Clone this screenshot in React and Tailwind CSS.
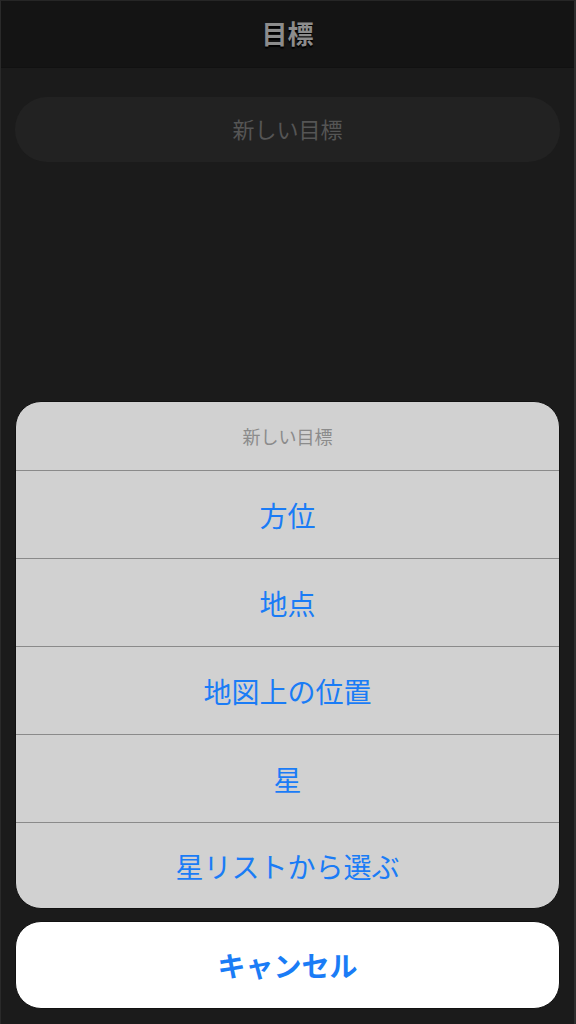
export default function App() {
  const font = { fontFamily: '"Noto Sans CJK JP", "Noto Sans", sans-serif' };
  const items = ["方位", "地点", "地図上の位置", "星", "星リストから選ぶ"];
  return (
    <div style={font} className="w-[576px] h-[1024px] bg-[#1b1b1b] flex flex-col border-l border-l-[#2a2a2a] border-r-2 border-r-[#2e2e2e] border-t border-t-[#262626] overflow-hidden">
      <div className="h-[67px] bg-[#141414] flex items-center justify-center shrink-0 border-b border-[#111] pb-[3px]">
        <span className="text-[26px] font-bold text-[#8c8c8c] leading-none [text-shadow:0_2px_1px_#000]">目標</span>
      </div>
      <div className="px-[14px] pt-[29px]">
        <div className="h-[65px] rounded-[32px] bg-[#222222] flex items-center justify-center pb-[3px]">
          <span className="text-[22px] text-[#555555]">新しい目標</span>
        </div>
      </div>
      <div className="flex-1" />
      <div className="px-[14px] pb-[15px] flex flex-col gap-[12px]">
        <div className="rounded-[26px] bg-[#d1d1d1] overflow-hidden border border-[#111]">
          <div className="h-[69px] flex items-center justify-center border-b border-[#8a8a8a]">
            <span className="text-[18px] text-[#8b8b8b]">新しい目標</span>
          </div>
          {items.map((t, i) => (
            <div
              key={t}
              className={
                i < items.length - 1
                  ? "h-[88px] flex items-center justify-center border-b border-[#8a8a8a]"
                  : "h-[85px] flex items-center justify-center"
              }
            >
              <span className="text-[28px] text-[#1a7cf6]">{t}</span>
            </div>
          ))}
        </div>
        <div className="h-[88px] rounded-[26px] bg-white flex items-center justify-center border border-[#111]">
          <span className="text-[28px] font-bold text-[#1a7cf6]">キャンセル</span>
        </div>
      </div>
    </div>
  );
}
